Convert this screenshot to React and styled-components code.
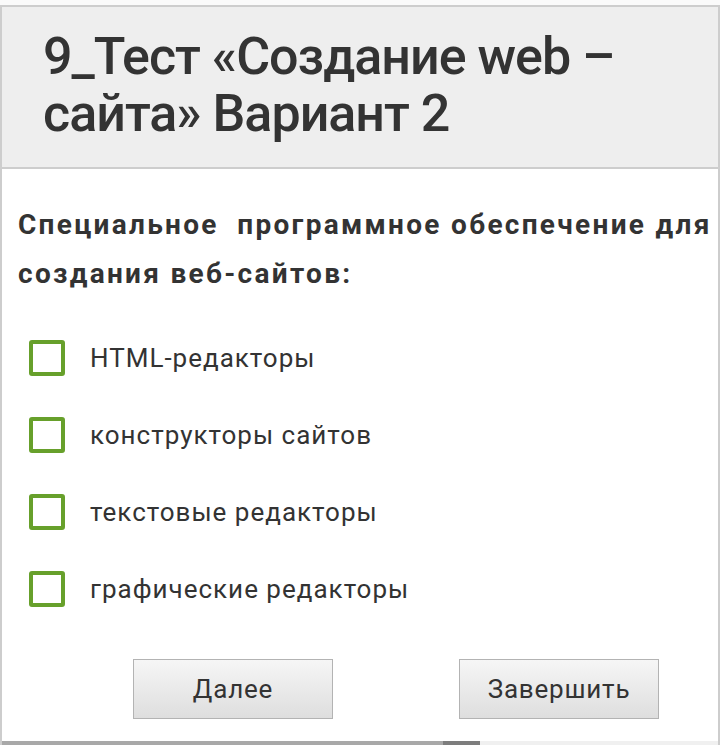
import React from 'react';
import styled, { createGlobalStyle } from 'styled-components';

const GlobalStyle = createGlobalStyle`
  body {
    margin: 0;
    background: #fafafa;
    font-family: Roboto, "Liberation Sans", sans-serif;
    color: #333;
  }
`;

const Page = styled.div`
  height: 745px;
  overflow: hidden;
  display: flex;
  flex-direction: column;
  padding-top: 5px;
  box-sizing: border-box;
`;

const Card = styled.div`
  flex: 1;
  display: flex;
  flex-direction: column;
  background: #fff;
  border: 2px solid #cdcdcd;
  border-bottom: none;
  width: 720px;
  box-sizing: border-box;
`;

const Header = styled.div`
  background: #eeeeee;
  border-bottom: 2px solid #cdcdcd;
  padding: 21px 20px 25px 41px;
`;

const Title = styled.h1`
  margin: 0;
  font-size: 52px;
  line-height: 57px;
  font-weight: 500;
  letter-spacing: -1px;
  color: #333;
`;

const Body = styled.div`
  flex: 1;
  display: flex;
  flex-direction: column;
  padding: 31px 0 0 16px;
`;

const Question = styled.p`
  margin: 0 0 42px;
  font-size: 28px;
  line-height: 49px;
  font-weight: 700;
  letter-spacing: 2.3px;
  color: #333;
  white-space: pre-wrap;
`;

const Options = styled.div`
  display: flex;
  flex-direction: column;
  gap: 41px;
  padding-left: 11px;
`;

const Option = styled.label`
  display: flex;
  align-items: center;
  gap: 25px;
  height: 36px;
  font-size: 26px;
  letter-spacing: 1px;
  color: #333;
`;

const Box = styled.span`
  width: 36px;
  height: 36px;
  box-sizing: border-box;
  border: 4px solid #67a02b;
  border-radius: 3px;
  flex-shrink: 0;
`;

const Actions = styled.div`
  display: flex;
  gap: 126px;
  padding-left: 115px;
  margin-top: 52px;
`;

const Button = styled.button`
  width: 200px;
  height: 60px;
  padding: 0;
  border: 1px solid #b3b3b3;
  background: linear-gradient(#f6f6f6, #dedede);
  font-family: Roboto, "Liberation Sans", sans-serif;
  font-size: 26px;
  letter-spacing: 0.8px;
  color: #333;
  border-radius: 0;
`;

const Track = styled.div`
  margin: auto 0 0 -16px;
  height: 4px;
  background: #f0f0f0;
  display: flex;
`;

const Fill = styled.div`
  background: ${(p) => p.$c};
  width: ${(p) => p.$w}px;
`;

const answers = ['HTML-редакторы', 'конструкторы сайтов', 'текстовые редакторы', 'графические редакторы'];

export default function App() {
  return (
    <>
      <GlobalStyle />
      <Page>
        <Card>
          <Header>
            <Title>9_Тест «Создание web – сайта» Вариант 2</Title>
          </Header>
          <Body>
            <Question>{'Специальное  программное обеспечение для создания веб-сайтов:'}</Question>
            <Options>
              {answers.map((a) => (
                <Option key={a}>
                  <Box />
                  {a}
                </Option>
              ))}
            </Options>
            <Actions>
              <Button>Далее</Button>
              <Button>Завершить</Button>
            </Actions>
            <Track>
              <Fill $c="#a8a8a8" $w={441} />
              <Fill $c="#7d7d7d" $w={37} />
            </Track>
          </Body>
        </Card>
      </Page>
    </>
  );
}
